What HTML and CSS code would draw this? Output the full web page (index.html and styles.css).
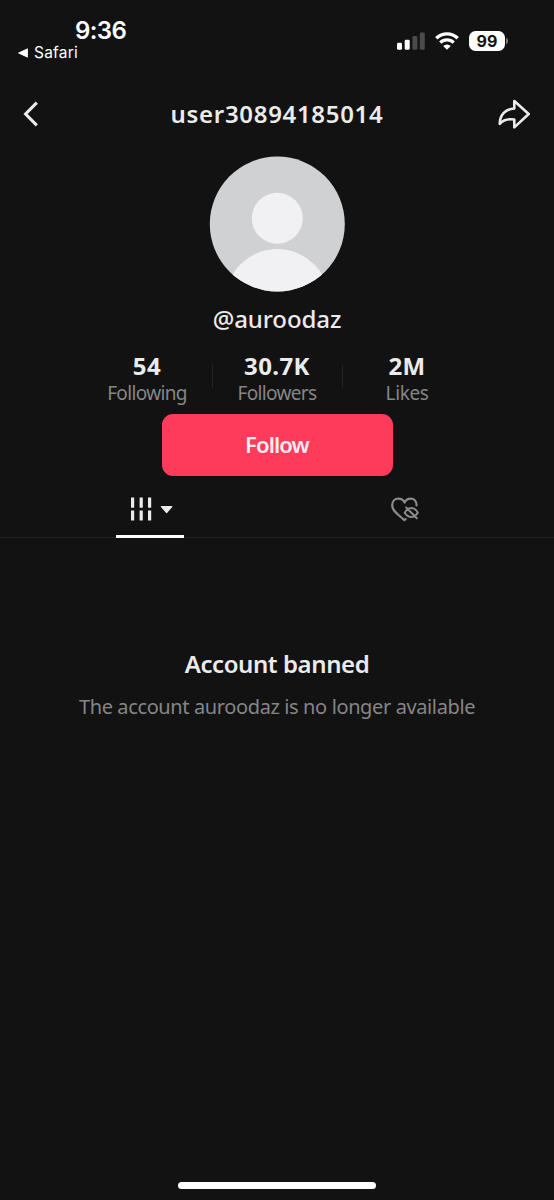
FILE: index.html
```html
<!DOCTYPE html>
<html lang="en">
<head>
<meta charset="utf-8">
<meta name="viewport" content="width=device-width">
<title>user30894185014</title>
<link rel="stylesheet" href="styles.css">
</head>
<body>
<div class="screen">
  <div class="status">
    <div class="status-left">
      <div class="clock">9:36</div>
      <div class="back-app">
        <svg width="10" height="10" viewBox="0 0 10 10"><path d="M.5 5 9.5.8v8.4z" fill="#fff" stroke="#fff" stroke-width=".8" stroke-linejoin="round"/></svg>
        <span>Safari</span>
      </div>
    </div>
    <div class="status-right">
      <svg class="signal" width="28" height="18" viewBox="0 0 28 18">
        <rect x="0" y="10.8" width="5" height="7" rx="1.4" fill="#fff"/>
        <rect x="7.7" y="7.8" width="5" height="10" rx="1.4" fill="#fff"/>
        <rect x="15.4" y="4" width="5" height="13.8" rx="1.4" fill="#4b4b4b"/>
        <rect x="22.8" y=".4" width="5" height="17.4" rx="1.4" fill="#4b4b4b"/>
      </svg>
      <svg class="wifi" width="24" height="18" viewBox="0 0 24 18" fill="none" stroke="#fff">
        <path d="M1.3 6.300a15.200 15.200 0 0 1 21.400 0" stroke-width="3.400"/>
        <path d="M5.300 10.600a9.500 9.500 0 0 1 13.400 0" stroke-width="3.300"/>
        <path d="M12 17.800 8.200 14a5.400 5.400 0 0 1 7.600 0z" fill="#fff" stroke="none"/>
      </svg>
      <div class="battery">99</div>
      <div class="battery-tip"></div>
    </div>
  </div>

  <div class="nav">
    <svg width="16" height="26" viewBox="0 0 16 26"><path d="M13.800 1.700 2.600 13l11.200 11.300" fill="none" stroke="#ebebeb" stroke-width="3.100"/></svg>
    <h1 class="title">user30894185014</h1>
    <svg width="34" height="32" viewBox="0 0 34 32"><path d="M17.300 3 31.700 16 17.300 29.400V21.500C11.200 20.600 6 22 2.700 25.800 2.900 17.500 7.800 11 17.300 10.500z" fill="none" stroke="#ebebeb" stroke-width="2.600" stroke-linejoin="round"/></svg>
  </div>

  <svg class="avatar" width="136" height="136" viewBox="0 0 136 136">
    <defs><clipPath id="disc"><circle cx="68.3" cy="68" r="67.5"/></clipPath></defs>
    <g clip-path="url(#disc)">
      <rect width="136" height="136" fill="#d0d1d3"/>
      <circle cx="68.300" cy="62.300" r="25.500" fill="#f1f1f4"/>
      <circle cx="68.300" cy="145" r="52" fill="#f1f1f4"/>
    </g>
  </svg>
  <div class="handle">@auroodaz</div>

  <div class="stats">
    <div class="stat"><b class="num">54</b><span class="label">Following</span></div>
    <div class="stat"><b class="num">30.7K</b><span class="label">Followers</span></div>
    <div class="stat"><b class="num">2M</b><span class="label label-short">Likes</span></div>
  </div>

  <button class="follow">Follow</button>

  <div class="tabs">
    <div class="tab">
      <div class="tab-active">
        <svg width="44" height="24" viewBox="0 0 44 24" fill="#ebebeb">
          <path d="M1 .6h3.200v10.200H1zM9.600.6h3.200v10.200H9.600zM18 .6h3.200v10.200H18zM1 13.400h3.200v10.200H1zM9.600 13.400h3.200v10.200H9.600zM18 13.400h3.200v10.200H18z"/>
          <path d="M31.400 9.700h10.400l-5.200 5.800z" stroke="#ebebeb" stroke-width="1.200" stroke-linejoin="round"/>
        </svg>
      </div>
    </div>
    <div class="tab">
      <svg width="30" height="26" viewBox="0 0 30 26" fill="none" stroke="#8b8b8b" stroke-width="2.200" stroke-linecap="round" stroke-linejoin="round">
        <path d="M26.600 8.400C26.600 4.300 24.200 1.700 20.800 1.700c-2.900 0-5 1.500-6.200 3.800C13.400 3.200 11.300 1.700 8.400 1.700 4.700 1.700 2.200 4.500 2.200 8.200c0 6.300 6.800 9.800 12.200 15l1.200-1.100"/>
        <path d="M14.700 15.700c2-3.500 4-4.600 6.600-4.600s4.700 1.200 6.500 4.600c-1.900 3.200-4 4.200-6.500 4.200s-4.600-1-6.600-4.200zM16.200 10.500l10.600 10.800" stroke-width="2"/>
      </svg>
    </div>
  </div>

  <div class="notice">
    <h2 class="notice-title">Account banned</h2>
    <p class="notice-text">The account auroodaz is no longer available</p>
  </div>
  <div class="home-bar"></div>
</div>
</body>
</html>
```
FILE: styles.css
```css
* { box-sizing: border-box; }
body {
  margin: 0;
  background: #121212;
  color: #ebebeb;
  font-family: "Noto Sans", "Open Sans", sans-serif;
}
svg { display: block; flex: none; }
.screen {
  width: 554px;
  height: 1200px;
  display: flex;
  flex-direction: column;
  align-items: center;
  overflow: hidden;
}
.status {
  width: 100%;
  height: 84px;
  flex: none;
  display: flex;
  justify-content: space-between;
  padding: 18px 46px 0 18px;
  color: #fff;
  font-family: Inter, sans-serif;
}
.clock {
  margin-left: 57px;
  font-size: 24px;
  line-height: 26px;
  font-weight: 600;
  letter-spacing: -.6px;
}
.back-app {
  display: flex;
  align-items: center;
  gap: 6px;
  font-size: 15.5px;
  line-height: 17px;
  letter-spacing: .2px;
}
.status-right {
  display: flex;
  align-items: center;
  height: 20px;
  margin-top: 13px;
}
.wifi { margin: 0 10px; }
.battery {
  width: 36px;
  height: 20px;
  border-radius: 6.5px;
  background: #fff;
  color: #121212;
  font-size: 16px;
  line-height: 20px;
  font-weight: 700;
  text-align: center;
}
.battery-tip {
  width: 2px;
  height: 6px;
  margin-left: 1px;
  border-radius: 0 2px 2px 0;
  background: #777;
}
.nav {
  width: 100%;
  height: 60px;
  flex: none;
  display: flex;
  align-items: center;
  justify-content: space-between;
  padding: 0 23px;
}
.title {
  margin: 0 0 1px 18px;
  font-size: 24px;
  line-height: 30px;
  font-weight: 600;
  letter-spacing: .68px;
}
.avatar { margin-top: 12px; }
.handle {
  margin-top: 12px;
  font-size: 24px;
  line-height: 30px;
  font-weight: 500;
  letter-spacing: -.1px;
}
.stats {
  display: flex;
  margin-top: 18px;
  height: 62px;
}
.stat {
  width: 130px;
  display: flex;
  flex-direction: column;
  align-items: center;
  position: relative;
}
.stat + .stat::before {
  content: "";
  position: absolute;
  left: 0;
  top: 13px;
  width: 1px;
  height: 23px;
  background: #242424;
}
.num {
  font-size: 24px;
  line-height: 28px;
  font-weight: 700;
  letter-spacing: .4px;
}
.label {
  font-size: 19px;
  line-height: 26px;
  letter-spacing: -.65px;
  color: #868686;
}
.label-short { letter-spacing: -.4px; }
.follow {
  width: 231px;
  height: 62px;
  padding: 0 0 2px;
  flex: none;
  border: 0;
  border-radius: 11px;
  background: #ff3b5c;
  color: #ffeef1;
  font: 600 22px/30px "Noto Sans", sans-serif;
  letter-spacing: -.9px;
}
.tabs {
  width: 100%;
  height: 62px;
  flex: none;
  display: flex;
  padding: 0 22px;
  border-bottom: 1px solid #242424;
}
.tab {
  width: 255px;
  display: flex;
  justify-content: center;
  padding-top: 21px;
}
.tab-active {
  width: 68px;
  height: 41px;
  display: flex;
  justify-content: center;
  padding-left: 4px;
  border-bottom: 3px solid #fff;
}
.notice {
  margin-top: 110px;
  text-align: center;
}
.notice-title {
  margin: 0;
  font-size: 24px;
  line-height: 32px;
  font-weight: 600;
  letter-spacing: -.42px;
}
.notice-text {
  margin: 12px 0 0;
  font-size: 20px;
  line-height: 30px;
  letter-spacing: -.38px;
  color: #868686;
}
.home-bar {
  width: 198px;
  height: 7px;
  margin: auto 0 11px;
  flex: none;
  border-radius: 4px;
  background: #fff;
}
```
